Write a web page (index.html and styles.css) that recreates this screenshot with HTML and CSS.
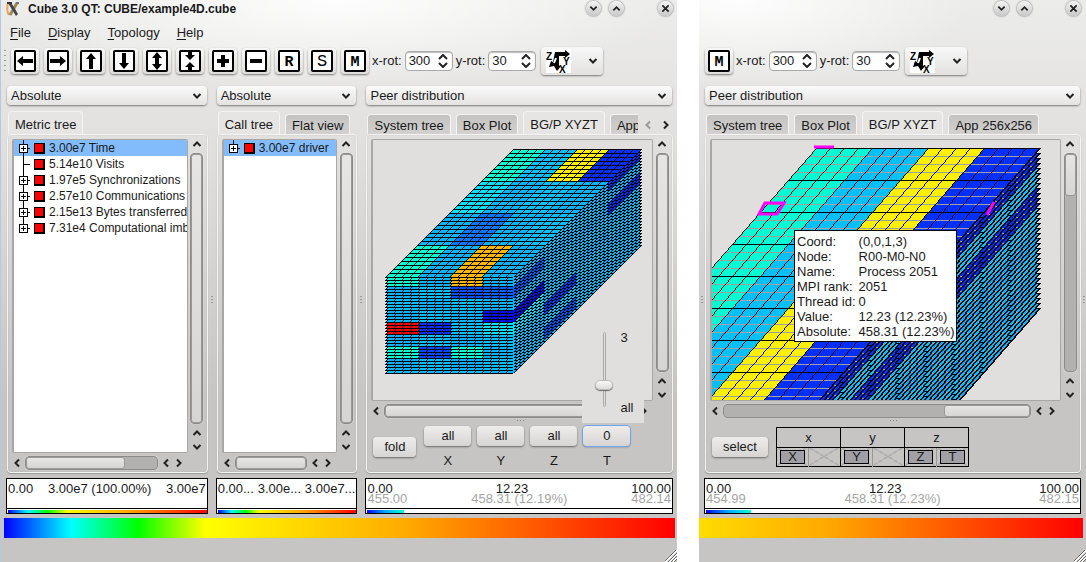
FILE: index.html
```html
<!doctype html>
<html lang="en">
  <head>
    <meta charset="utf-8">
    <title>Cube 3.0 QT: CUBE/example4D.cube</title>
    <link rel="stylesheet" href="styles.css">
  </head>
  <body>
    <svg class="defs" aria-hidden="true">
      <symbol id="up" viewBox="0 0 10 10"><path d="M1.5 7 5 3.5 8.5 7" /></symbol>
      <symbol id="down" viewBox="0 0 10 10"><path d="M1.5 3 5 6.5 8.5 3" /></symbol>
      <symbol id="left" viewBox="0 0 10 10"><path d="M7 1.5 3.5 5 7 8.5" /></symbol>
      <symbol id="right" viewBox="0 0 10 10"><path d="M3 1.5 6.5 5 3 8.5" /></symbol>
      <symbol id="close" viewBox="0 0 10 10"><path d="M1.5 1.5 8.5 8.5M8.5 1.5 1.5 8.5" /></symbol>
      <symbol id="updown" viewBox="0 0 10 14"><path d="M1 5 5 1 9 5M1 9 5 13 9 9" /></symbol>
      <symbol id="frame" viewBox="0 0 22 22"><rect x="1" y="1" width="20" height="20" rx="1" fill="#fff" stroke="#000" stroke-width="2" /></symbol>
      <symbol id="plus" viewBox="0 0 12 16"><path d="M5.5 0V16M5.5 8.5H12" stroke="#000" /><rect x="1.5" y="4.5" width="8" height="8" fill="#fff" stroke="#000" /><path d="M3 8.5H8M5.5 6V11" stroke="#000" /></symbol>
      <symbol id="plus-last" viewBox="0 0 12 16"><path d="M5.5 0V5M5.5 8.5H12" stroke="#000" /><rect x="1.5" y="4.5" width="8" height="8" fill="#fff" stroke="#000" /><path d="M3 8.5H8M5.5 6V11" stroke="#000" /></symbol>
      <symbol id="branch" viewBox="0 0 12 16"><path d="M5.5 0V16M5.5 8.5H12" stroke="#000" /></symbol>
      <symbol id="order" viewBox="0 0 25 24">
        <rect width="25" height="24" fill="#fff" />
        <path d="M9 3H19V1L24 5 19 9V7H13V17H15L11 22 8 17 3 18 5 12 7 13Z" fill="#000" />
        <path d="M10 9 8 14" stroke="#fff" />
        <text x="0" y="11" font-size="10">Z</text>
        <text x="13" y="24" font-size="10">X</text>
        <text x="17" y="16" font-size="10">Y</text>
      </symbol>
      <symbol id="grip" viewBox="0 0 12 12"><path d="M0 12 12 0M4 12 12 4M8 12 12 8" stroke="#fff" stroke-width="2" /><path d="M0 11 11 0M3 12 12 3M6 12 12 6M9 12 12 9" stroke="#666" /></symbol>
    </svg>

    <div class="desktop">
      <section class="window">
        <header class="titlebar">
          <svg class="app-icon" viewBox="0 0 14 16"><path d="M2 2Q0 10 3 14" stroke="#f3a05a" stroke-width="2" fill="none" /><path d="M11 2 4 14" stroke="#9a8b55" stroke-width="3" /><path d="M2 2 6 3 12 13 10 15Z" fill="#444" /><path d="M1 2H6" stroke="#333" stroke-width="2" /><path d="M10 2H13" stroke="#777" stroke-width="2" /></svg>
          <h1>Cube 3.0 QT: CUBE/example4D.cube</h1>
          <div class="controls">
            <button aria-label="Minimize"><svg><use href="#down" /></svg></button>
            <button aria-label="Maximize"><svg><use href="#up" /></svg></button>
            <button class="close" aria-label="Close"><svg><use href="#close" /></svg></button>
          </div>
        </header>
        <nav class="menu">
          <a href="#"><u>F</u>ile</a>
          <a href="#"><u>D</u>isplay</a>
          <a href="#"><u>T</u>opology</a>
          <a href="#"><u>H</u>elp</a>
        </nav>
        <div class="toolbar">
          <span class="handle"></span>
          <button class="tool" aria-label="Move left"><svg viewBox="0 0 22 22"><use href="#frame" /><path d="M3 11 9 6V9H19V13H9V16Z" /></svg></button>
          <button class="tool" aria-label="Move right"><svg viewBox="0 0 22 22"><use href="#frame" /><path d="M19 11 13 6V9H3V13H13V16Z" /></svg></button>
          <button class="tool" aria-label="Move up"><svg viewBox="0 0 22 22"><use href="#frame" /><path d="M11 3 6 9H9V19H13V9H16Z" /></svg></button>
          <button class="tool" aria-label="Move down"><svg viewBox="0 0 22 22"><use href="#frame" /><path d="M11 19 6 13H9V3H13V13H16Z" /></svg></button>
          <button class="tool" aria-label="Increase distance"><svg viewBox="0 0 22 22"><use href="#frame" /><path d="M11 2 6 8H9V14H6L11 20 16 14H13V8H16Z" /></svg></button>
          <button class="tool" aria-label="Decrease distance"><svg viewBox="0 0 22 22"><use href="#frame" /><path d="M9 2H13V5H16L11 10 6 5H9ZM9 20H13V17H16L11 12 6 17H9Z" /></svg></button>
          <button class="tool" aria-label="Zoom in"><svg viewBox="0 0 22 22"><use href="#frame" /><path d="M9 5H13V9H17V13H13V17H9V13H5V9H9Z" /></svg></button>
          <button class="tool" aria-label="Zoom out"><svg viewBox="0 0 22 22"><use href="#frame" /><path d="M5 9H17V13H5Z" /></svg></button>
          <button class="tool" aria-label="Reset"><svg viewBox="0 0 22 22"><use href="#frame" /><text x="11" y="16">R</text></svg></button>
          <button class="tool" aria-label="Scale"><svg viewBox="0 0 22 22"><use href="#frame" /><text class="thin" x="11" y="16">S</text></svg></button>
          <button class="tool" aria-label="Min/max"><svg viewBox="0 0 22 22"><use href="#frame" /><text x="11" y="16">M</text></svg></button>
          <label class="rot">x-rot: <span class="spin"><input type="number" value="300"><svg><use href="#updown" /></svg></span></label>
          <label class="rot">y-rot: <span class="spin"><input type="number" value="30"><svg><use href="#updown" /></svg></span></label>
          <button class="order" aria-label="Axis order"><svg class="axes"><use href="#order" /></svg><svg class="arrow"><use href="#down" /></svg></button>
        </div>

        <main class="panes">
          <div class="pane">
            <div class="combo"><select aria-label="Metric values"><option>Absolute</option></select><svg class="arrow"><use href="#down" /></svg></div>
            <div class="tabs"><button class="tab active">Metric tree</button></div>
            <div class="panel">
              <div class="scroller">
                <ul class="view tree">
                  <li class="selected"><svg class="node"><use href="#plus" /></svg><i></i><span>3.00e7 Time</span></li>
                  <li><svg class="node"><use href="#branch" /></svg><i></i><span>5.14e10 Visits</span></li>
                  <li><svg class="node"><use href="#plus" /></svg><i></i><span>1.97e5 Synchronizations</span></li>
                  <li><svg class="node"><use href="#plus" /></svg><i></i><span>2.57e10 Communications</span></li>
                  <li><svg class="node"><use href="#plus" /></svg><i></i><span>2.15e13 Bytes transferred</span></li>
                  <li><svg class="node"><use href="#plus-last" /></svg><i></i><span>7.31e4 Computational imbalance</span></li>
                </ul>
                <div class="vbar"><svg><use href="#up" /></svg><div class="track"><div class="thumb"></div></div><svg><use href="#up" /></svg><svg><use href="#down" /></svg></div>
                <div class="hbar"><svg><use href="#left" /></svg><div class="track"><div class="thumb most"></div></div><svg><use href="#left" /></svg><svg><use href="#right" /></svg></div>
              </div>
            </div>
            <div class="legend">
              <div class="row"><span>0.00</span><span>3.00e7 (100.00%)</span><span>3.00e7</span></div>
              <div class="scale"><div class="full"></div></div>
            </div>
          </div>
          <div class="splitter"></div>
          <div class="pane">
            <div class="combo"><select aria-label="Call tree values"><option>Absolute</option></select><svg class="arrow"><use href="#down" /></svg></div>
            <div class="tabs"><button class="tab active">Call tree</button><button class="tab">Flat view</button></div>
            <div class="panel">
              <div class="scroller">
                <ul class="view tree">
                  <li class="selected"><svg class="node"><use href="#plus-last" /></svg><i></i><span>3.00e7 driver</span></li>
                </ul>
                <div class="vbar"><svg><use href="#up" /></svg><div class="track"><div class="thumb"></div></div><svg><use href="#up" /></svg><svg><use href="#down" /></svg></div>
                <div class="hbar"><svg><use href="#left" /></svg><div class="track"><div class="thumb"></div></div><svg><use href="#left" /></svg><svg><use href="#right" /></svg></div>
              </div>
            </div>
            <div class="legend">
              <div class="row"><span>0.00...</span><span>3.00e...</span><span>3.00e7...</span></div>
              <div class="scale"><div class="full"></div></div>
            </div>
          </div>
          <div class="splitter"></div>
          <div class="pane">
            <div class="combo"><select aria-label="System values"><option>Peer distribution</option></select><svg class="arrow"><use href="#down" /></svg></div>
            <div class="tabs">
              <div class="strip"><button class="tab">System tree</button><button class="tab">Box Plot</button><button class="tab active">BG/P XYZT</button><button class="tab">App 256x256</button></div>
              <div class="tab-scroll"><svg class="off"><use href="#left" /></svg><svg><use href="#right" /></svg></div>
            </div>
            <div class="panel">
              <div class="scroller">
                <div class="view"><canvas id="torus" width="278" height="259"></canvas></div>
                <div class="vbar"><svg><use href="#up" /></svg><div class="track"><div class="thumb"></div></div><svg><use href="#up" /></svg><svg><use href="#down" /></svg></div>
                <div class="hbar"><svg><use href="#left" /></svg><div class="track"><div class="thumb"></div></div><svg><use href="#right" /></svg></div>
              </div>
              <div class="hsplit"></div>
              <div class="axes-row">
                <button class="push">fold</button>
                <div class="axis"><button class="push" id="ax">all</button><label for="ax">X</label></div>
                <div class="axis"><button class="push" id="ay">all</button><label for="ay">Y</label></div>
                <div class="axis"><button class="push" id="az">all</button><label for="az">Z</label></div>
                <div class="axis">
                  <button class="push focus" id="at">0</button><label for="at">T</label>
                  <div class="popup"><input type="range" min="0" max="4" value="1" aria-label="T slice"><div class="marks"><span>3</span><span>all</span></div></div>
                </div>
              </div>
            </div>
            <div class="legend">
              <div class="row"><span>0.00</span><span>12.23</span><span>100.00</span></div>
              <div class="row dim"><span>455.00</span><span>458.31 (12.19%)</span><span>482.14</span></div>
              <div class="scale"><div class="part"></div></div>
            </div>
          </div>
        </main>
        <div class="colorbar"></div>
        <footer><svg><use href="#grip" /></svg></footer>
      </section>

      <section class="window second">
        <header class="titlebar">
          <div class="controls">
            <button aria-label="Minimize"><svg><use href="#down" /></svg></button>
            <button aria-label="Maximize"><svg><use href="#up" /></svg></button>
            <button class="close" aria-label="Close"><svg><use href="#close" /></svg></button>
          </div>
        </header>
        <nav class="menu"></nav>
        <div class="toolbar">
          <button class="tool" aria-label="Min/max"><svg viewBox="0 0 22 22"><use href="#frame" /><text x="11" y="16">M</text></svg></button>
          <label class="rot">x-rot: <span class="spin"><input type="number" value="300"><svg><use href="#updown" /></svg></span></label>
          <label class="rot">y-rot: <span class="spin"><input type="number" value="30"><svg><use href="#updown" /></svg></span></label>
          <button class="order" aria-label="Axis order"><svg class="axes"><use href="#order" /></svg><svg class="arrow"><use href="#down" /></svg></button>
        </div>
        <main class="panes">
          <div class="splitter"></div>
          <div class="pane">
            <div class="combo"><select aria-label="System values"><option>Peer distribution</option></select><svg class="arrow"><use href="#down" /></svg></div>
            <div class="tabs"><button class="tab">System tree</button><button class="tab">Box Plot</button><button class="tab active">BG/P XYZT</button><button class="tab">App 256x256</button></div>
            <div class="panel">
              <div class="scroller">
                <div class="view plot">
                  <canvas id="folded" width="347" height="260"></canvas>
                  <table class="tip">
                    <tr><th>Coord:</th><td>(0,0,1,3)</td></tr>
                    <tr><th>Node:</th><td>R00-M0-N0</td></tr>
                    <tr><th>Name:</th><td>Process 2051</td></tr>
                    <tr><th>MPI rank:</th><td>2051</td></tr>
                    <tr><th>Thread id:</th><td>0</td></tr>
                    <tr><th>Value:</th><td>12.23 (12.23%)</td></tr>
                    <tr><th>Absolute:</th><td>458.31 (12.23%)</td></tr>
                  </table>
                </div>
                <div class="vbar"><svg><use href="#up" /></svg><div class="track"><div class="thumb short"></div></div><svg><use href="#up" /></svg><svg><use href="#down" /></svg></div>
                <div class="hbar"><svg><use href="#left" /></svg><div class="track"><div class="thumb end"></div></div><svg><use href="#left" /></svg><svg><use href="#right" /></svg></div>
              </div>
              <div class="hsplit"></div>
              <div class="axes-row">
                <button class="push">select</button>
                <table class="fold">
                  <tr><th colspan="2">x</th><th colspan="2">y</th><th colspan="2">z</th></tr>
                  <tr>
                    <td><button>X</button></td><td></td>
                    <td><button>Y</button></td><td></td>
                    <td><button>Z</button></td><td><button>T</button></td>
                  </tr>
                </table>
              </div>
            </div>
            <div class="legend">
              <div class="row"><span>0.00</span><span>12.23</span><span>100.00</span></div>
              <div class="row dim"><span>454.99</span><span>458.31 (12.23%)</span><span>482.15</span></div>
              <div class="scale"><div class="part"></div></div>
            </div>
          </div>
          <div class="splitter"></div>
        </main>
        <div class="colorbar"></div>
        <footer><svg><use href="#grip" /></svg></footer>
      </section>
    </div>
    <script src="cube.js"></script>
  </body>
</html>
```
FILE: styles.css
```css
* {
  box-sizing: border-box;
}

body {
  margin: 0;
  background: #fff;
  color: #1a1a1a;
  font-family: "Liberation Sans", Arial, sans-serif;
  font-size: 13px;
  line-height: 15px;
}

button, input, select {
  font: inherit;
  color: inherit;
  margin: 0;
  padding: 0;
  border: none;
}

.defs {
  position: absolute;
  width: 0;
  height: 0;
}

svg {
  display: block;
  flex: none;
  width: 10px;
  height: 10px;
  fill: none;
  stroke: #222;
  stroke-width: 2;
}

.desktop {
  display: grid;
  grid-template-columns: 677fr 387fr;
  column-gap: 22px;
  min-height: 100vh;
}

.window {
  display: flex;
  flex-direction: column;
  min-width: 0;
  background:
    radial-gradient(ellipse 50% 90px at 50% 0, rgba(255, 255, 255, 0.9), rgba(255, 255, 255, 0)),
    linear-gradient(#ececeb, #e0dfde 150px, #c6c5c3 400px);
}

.window:first-child {
  box-shadow: inset 1px 0 #b4c8e4;
}

.second {
  background:
    radial-gradient(ellipse 60% 90px at 10% 0, rgba(255, 255, 255, 0.9), rgba(255, 255, 255, 0)),
    linear-gradient(#ececeb, #e0dfde 150px, #c6c5c3 400px);
}

/* title bar, menu, tools */

.titlebar {
  display: flex;
  height: 20px;
  padding: 1px 4px 0 6px;
}

.app-icon {
  width: 14px;
  height: 16px;
  margin-right: 8px;
  stroke: none;
}

h1 {
  margin: 0;
  font-size: 12px;
  line-height: 16px;
}

.controls {
  display: flex;
  gap: 8px;
  margin-left: auto;
}

.controls button {
  display: grid;
  place-items: center;
  width: 15px;
  height: 15px;
  border-radius: 50%;
  background: linear-gradient(#f4f4f4, #c8c8c8);
  box-shadow: 0 0 2px #444;
}

.controls svg {
  width: 9px;
  height: 9px;
}

.controls .close {
  margin-left: 26px;
}

.second .titlebar {
  padding-right: 5px;
}

.menu {
  display: flex;
  gap: 17px;
  height: 26px;
  padding: 5px 10px;
}

.menu a {
  color: inherit;
  text-decoration: none;
}

.menu u {
  text-underline-offset: 2px;
}

.toolbar {
  display: flex;
  align-items: center;
  gap: 5px;
  height: 29px;
  padding: 0 4px;
}

.second .toolbar {
  padding-left: 6px;
}

.handle {
  width: 2px;
  height: 26px;
  background: radial-gradient(circle, #999 1px, transparent 1px) 0 0 / 2px 5px;
}

.tool {
  display: grid;
  flex: none;
  place-items: center;
  width: 28px;
  height: 26px;
  border-radius: 4px;
  background: linear-gradient(#f8f8f8, #dedddc);
  box-shadow: 0 1px 2px #777;
}

.tool svg {
  width: 22px;
  height: 22px;
  fill: #000;
  stroke: none;
}

.tool text {
  font: bold 15px "Liberation Mono", monospace;
  text-anchor: middle;
}

.tool .thin {
  font-weight: normal;
  font-size: 17px;
}

.rot {
  display: flex;
  align-items: center;
  gap: 3px;
  margin: 0 0 0 -2px;
}

.spin {
  display: flex;
  align-items: center;
  width: 48px;
  height: 20px;
  padding: 0 4px 0 3px;
  border: 1px solid #aaa;
  border-radius: 4px;
  background: #fff;
  box-shadow: inset 0 1px 1px #bbb;
}

.spin input {
  flex: 1;
  min-width: 0;
  background: none;
  appearance: textfield;
}

.spin input::-webkit-inner-spin-button {
  appearance: none;
}

.spin svg {
  height: 14px;
}

.order {
  display: flex;
  align-items: center;
  justify-content: space-between;
  width: 62px;
  height: 28px;
  padding: 0 5px;
  border-radius: 4px;
  background: linear-gradient(#f8f8f8, #e2e1e0);
  box-shadow: 0 1px 2px #777;
}

.axes {
  width: 25px;
  height: 24px;
  stroke: none;
}

.axes, .axes text {
  font-weight: bold;
}

symbol text {
  fill: #000;
}

/* panes */

.panes {
  display: grid;
  flex: 1;
  grid-template-columns: 202fr 8px 142fr 8px 308fr;
  padding: 11px 4px 0 6px;
}

.second .panes {
  grid-template-columns: 5px 1fr 5px;
  padding: 11px 0 0;
}

.pane {
  display: flex;
  flex-direction: column;
  min-width: 0;
}

.splitter {
  align-self: center;
  justify-self: center;
  width: 2px;
  height: 9px;
  background: linear-gradient(#999 1px, transparent 1px) 0 0 / 2px 3px;
}

.combo {
  display: grid;
  align-items: center;
  height: 19px;
  margin: 0 1px;
  border-radius: 4px;
  background: linear-gradient(#fafafa, #e4e3e2);
  box-shadow: 0 1px 2px #777;
}

.combo select {
  grid-area: 1 / 1;
  width: 100%;
  height: 19px;
  padding: 0 20px 0 4px;
  background: none;
  appearance: none;
}

.combo .arrow {
  grid-area: 1 / 1;
  justify-self: end;
  margin-right: 5px;
  pointer-events: none;
}

.tabs {
  display: flex;
  align-items: flex-end;
  gap: 5px;
  height: 29px;
  margin: 0 2px;
}

.strip {
  display: flex;
  flex: 1;
  align-items: flex-end;
  gap: 5px;
  min-width: 0;
  overflow: hidden;
}

.tab {
  flex: none;
  height: 20px;
  padding: 2px 6px 0;
  border: 1px solid #f4f4f4;
  border-bottom: none;
  border-radius: 4px 4px 0 0;
  background: linear-gradient(#c4c3c2, #d2d1d0);
  white-space: nowrap;
}

.tab.active {
  height: 23px;
  padding-top: 2px;
  background: #e6e5e4;
}

.tab-scroll {
  display: flex;
  gap: 8px;
  width: 28px;
  height: 14px;
}

.off {
  stroke: #999;
}

.panel {
  display: flex;
  flex: 1;
  flex-direction: column;
  margin: 0 0 0 1px;
  padding: 4px 1px 1px 4px;
  border: 1px solid #f4f4f4;
  border-radius: 4px;
  box-shadow: 0 1px 1px #999, inset 0 0 1px #999;
}

.scroller {
  display: grid;
  flex: 1;
  grid-template: 1fr 18px / minmax(0, 1fr) 18px;
}

.view {
  margin: 0;
  border: 1px solid #a8a7a6;
  border-left-width: 2px;
  border-radius: 2px;
  background: #e0dfde;
  overflow: hidden;
}

.plot {
  position: relative;
}

canvas {
  display: block;
}

.tree {
  padding: 0;
  background: #fff;
  font-size: 12px;
  line-height: 16px;
  list-style: none;
}

.tree li {
  display: flex;
  align-items: center;
  height: 16px;
  padding-left: 4px;
  white-space: nowrap;
}

.tree .selected {
  background: #82bcfc;
}

.node {
  width: 12px;
  height: 16px;
  margin-right: 4px;
  stroke-width: 1;
}

.tree i {
  flex: none;
  width: 11px;
  height: 11px;
  margin-right: 4px;
  border: 2px solid #000;
  border-width: 1px 2px 2px 1px;
  background: #f00;
}

/* scroll bars */

.vbar, .hbar {
  display: flex;
  align-items: center;
}

.vbar {
  flex-direction: column;
  gap: 4px;
  padding: 0 2px 1px;
}

.hbar {
  gap: 3px;
  padding: 1px 4px 0 0;
}

.track {
  display: flex;
  flex: 1;
  border: 1px solid #8c8b8a;
  border-radius: 4px;
  background: #b2b1b0;
  box-shadow: 0 0 1px #fff;
}

.vbar .track {
  width: 13px;
  flex-direction: column;
}

.hbar .track {
  height: 14px;
}

.thumb {
  flex: 1;
  border: 1px solid #999;
  border-radius: 3px;
  background: linear-gradient(#e6e5e4, #d6d5d4);
}

.most {
  flex: none;
  width: 76%;
}

.short {
  flex: none;
  height: 42px;
}

.end {
  flex: none;
  width: 28%;
  margin-left: auto;
}

.hsplit {
  align-self: center;
  width: 9px;
  height: 3px;
  background: linear-gradient(90deg, #888 1px, transparent 1px) 0 1px / 3px 1px repeat-x;
}

.axes-row {
  display: flex;
  align-items: center;
  gap: 6px;
  height: 49px;
}

.push {
  height: 20px;
  padding: 0 11px;
  border-radius: 4px;
  background: linear-gradient(#eeedec, #d6d5d4);
  box-shadow: 0 1px 2px #666;
}

.axes-row > .push {
  margin: 0 2px;
}

.axis {
  display: flex;
  flex-direction: column;
  align-items: center;
  gap: 7px;
  position: relative;
}

.axis .push {
  width: 47px;
}

.axis .focus {
  box-shadow: 0 0 0 1px #6ba6f0, 0 1px 2px #666;
}

.popup {
  display: flex;
  position: absolute;
  bottom: 100%;
  left: -1px;
  width: 62px;
  height: 96px;
  margin-bottom: 3px;
  padding: 5px 2px 16px 12px;
  background: #e0dfde;
}

.popup input {
  width: 20px;
  background: none;
  appearance: none;
  writing-mode: vertical-lr;
  direction: rtl;
}

.popup input::-webkit-slider-runnable-track {
  width: 3px;
  border: 1px solid #aaa;
  border-radius: 2px;
  background: #ddd;
}

.popup input::-webkit-slider-thumb {
  appearance: none;
  width: 18px;
  height: 10px;
  margin-left: -9px;
  border: 1px solid #bbb;
  border-radius: 5px;
  background: linear-gradient(#f8f8f8, #dddcdb);
  box-shadow: 0 1px 1px #666;
}

.marks {
  display: flex;
  flex-direction: column;
  justify-content: space-between;
  margin: -2px 0 -8px 6px;
}

.tip {
  position: absolute;
  top: 90px;
  left: 82px;
  padding: 3px 0 2px;
  border: 1px solid #000;
  background: #fff;
  border-spacing: 0;
}

.tip th, .tip td {
  padding: 0 1px 0 2px;
  font-weight: normal;
  text-align: left;
  white-space: nowrap;
}

.fold {
  border: 1px solid #000;
  border-collapse: collapse;
  text-align: center;
}

.fold th {
  width: 64px;
  height: 20px;
  padding: 0;
  border: 1px solid #000;
  font-weight: normal;
}

.fold td {
  width: 32px;
  height: 19px;
  padding: 0;
  background:
    linear-gradient(31deg, transparent 49%, #999 49%, #999 51%, transparent 51%),
    linear-gradient(-31deg, transparent 49%, #999 49%, #999 51%, transparent 51%);
}

.fold td:nth-child(even) {
  border-left: 1px solid #999;
  border-right: 1px solid #000;
}

.fold button {
  display: block;
  width: 25px;
  height: 14px;
  margin: auto;
  border: 1px solid #000;
  background: #a09fa5;
  line-height: 12px;
}

/* value legends and colour scale */

.legend {
  display: flex;
  flex-direction: column;
  height: 36px;
  margin-top: 5px;
  border: 1px solid #000;
  background: #fff;
}

.row {
  display: flex;
  justify-content: space-between;
  padding: 5px 1px 0;
  line-height: 10px;
  white-space: nowrap;
}

.dim {
  padding-top: 0;
  color: #a5a5a5;
}

.scale {
  height: 5px;
  margin-top: auto;
  padding: 1px 0 0 1px;
  border-top: 1px solid #000;
}

.full {
  height: 3px;
  background: linear-gradient(90deg, #00f, #0ff 10%, #0f0 20%, #ff0 30%, #fa0 60%, #f00);
}

.part {
  width: 12%;
  height: 3px;
  background: linear-gradient(90deg, #00f, #0af 50%, #0fc);
}

.colorbar {
  flex: none;
  height: 20px;
  margin: 4px 2px 0 4px;
  background: linear-gradient(90deg, #00f, #0ff 10%, #0f0 20%, #ff0 30%, #fa0 60%, #f00);
}

.second .colorbar {
  margin: 4px 3px 0 0;
  background: linear-gradient(90deg, #ffdc00, #fa0 33%, #f00);
}

footer {
  display: flex;
  flex: none;
  align-items: flex-end;
  justify-content: flex-end;
  height: 24px;
}

footer svg {
  width: 12px;
  height: 12px;
  stroke-width: 1;
}
```
FILE: cube.js
```js
// Each topology is a stack of horizontal planes, painted bottom to top.
const TEAL = '#00ffd2';
const CYAN = '#00c0ff';
const LIGHT = '#00e0ff';
const YELLOW = '#fff000';
const BLUE = '#0030ff';

function drawCube(id, o) {
  const ctx = document.getElementById(id).getContext('2d');
  const cols = 16;
  const planes = 33;
  const width = cols * o.colW;
  for (let p = planes - 1; p >= 0; p--) {
    const top = o.y + p * o.step;
    for (let r = 0; r < o.rows; r++) {
      for (let dy = 0; dy < o.rowH; dy++) {
        const d = r * o.rowH + dy;
        const x = o.x - Math.round(d * o.slope);
        for (let c = 0; c < cols; c += 4) {
          ctx.fillStyle = o.color(p >> 2, r >> 3, c >> 2);
          ctx.fillRect(x + c * o.colW, top + d, 4 * o.colW, 1);
        }
        if (dy === 0) {
          ctx.fillStyle = r % o.major ? '#a0a0a0' : '#000';
          ctx.fillRect(x, top + d, width, 1);
        }
        ctx.fillStyle = '#000';
        for (let c = 0; c < cols; c++) {
          ctx.fillRect(x + c * o.colW, top + d, 1, 1);
        }
        ctx.fillRect(x + width - o.edge + 1, top + d, o.edge, 1);
      }
    }
    const end = o.rows * o.rowH;
    ctx.fillStyle = '#000';
    ctx.fillRect(o.x - Math.round(end * o.slope), top + end, width, 1);
  }
  return ctx;
}

// values keyed by plane block, row block, column block
const blocks = {
  '000': TEAL, '002': YELLOW, '003': BLUE,
  '010': LIGHT, '021': '#0078ff',
  '030': TEAL, '032': '#ffb800',
  '132': '#0050ff', '133': '#0060ff',
  '203': BLUE,
  '333': '#0010ff',
  '430': '#ff0000', '431': BLUE, '433': LIGHT,
  '523': '#0040ff',
  '630': TEAL, '631': '#0048ff', '632': TEAL,
  '723': '#0058ff'
};

drawCube('torus', {
  x: 140, y: 9, colW: 8, rowH: 4, rows: 32, step: 3, slope: 1, major: 1, edge: 1,
  color: (p, r, c) => blocks['' + p + r + c] || ((p + r + c) % 2 ? CYAN : '#00b4ff')
});

const ctx = drawCube('folded', {
  x: 104, y: 8, colW: 14, rowH: 8, rows: 40, step: 5, slope: 7 / 8, major: 4, edge: 2,
  color: (p, r, c) => {
    if (p === 0) return [TEAL, CYAN, YELLOW, BLUE][c];
    if (p === 2) return BLUE;
    return p % 2 ? CYAN : '#00b0ff';
  }
});

// selected process and its marks on the outer faces
ctx.strokeStyle = '#f0f';
ctx.lineWidth = 3;
ctx.beginPath();
ctx.moveTo(102, 7);
ctx.lineTo(122, 7);
ctx.moveTo(53, 63);
ctx.lineTo(72, 63);
ctx.lineTo(65, 74);
ctx.lineTo(47, 74);
ctx.closePath();
ctx.moveTo(282, 62);
ctx.lineTo(275, 75);
ctx.stroke();
```
